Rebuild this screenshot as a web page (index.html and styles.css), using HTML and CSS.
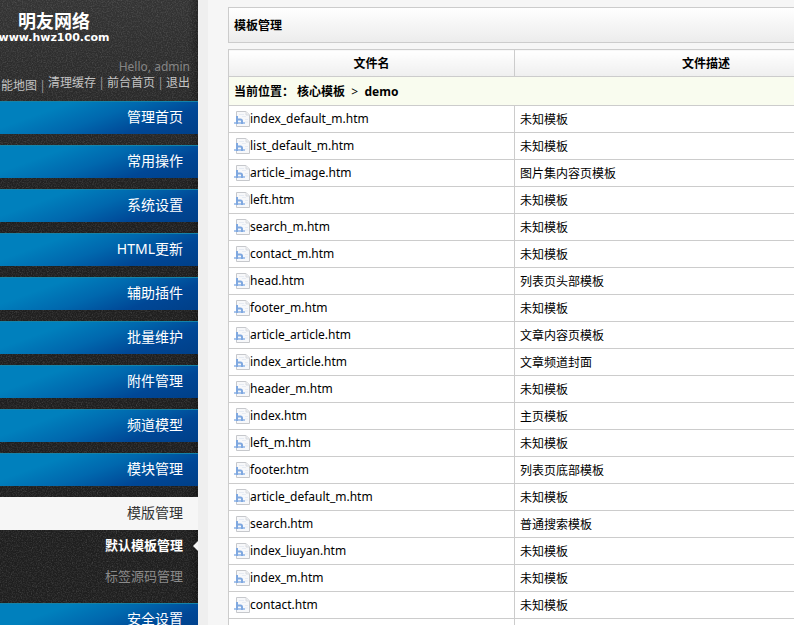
FILE: index.html
```
<!DOCTYPE html>
<html lang="zh-CN">
<head>
<meta charset="utf-8">
<title>模板管理</title>
<link rel="stylesheet" href="styles.css">
</head>
<body>
<svg class="defs" aria-hidden="true">
  <symbol id="file" viewBox="0 0 16 16">
    <path d="M2.500 .5h9.500l3.500 3.500v11.500h-13z" fill="#f7f8fa" stroke="#c6c8cc"/>
    <path d="M12 .5v3.500h3.500" fill="#eceef1" stroke="#d8dade"/>
    <path d="M5 3.500h5M8 5.500h4M11 8.500h3M11 11h3" stroke="#e6ebf3" fill="none"/>
    <path d="M0 11h11v2H0z" fill="#a9c5eb"/>
    <path d="M3 5v8M3 8.500h3.500q1.500 0 1.500 1.500v3" fill="none" stroke="#7fa8e0" stroke-width="2"/>
  </symbol>
</svg>
<div class="layout">
  <aside class="sidebar">
    <svg class="grain" aria-hidden="true">
      <filter id="noise" x="0" y="0" width="100%" height="100%">
        <feTurbulence type="fractalNoise" baseFrequency="0.8" numOctaves="2" seed="4"/>
        <feColorMatrix type="matrix" values="0 0 0 0 1  0 0 0 0 1  0 0 0 0 1  0.6 0.6 0 0 -0.52"/>
      </filter>
      <rect width="100%" height="100%" filter="url(#noise)"/>
    </svg>
    <header class="brand">
      <div class="logo"><strong>明友网络</strong><span>www.hwz100.com</span></div>
      <p class="hello">Hello, admin</p>
      <p class="quick"><a class="map" href="#">能地图</a><i>|</i><a href="#">清理缓存</a><i>|</i><a href="#">前台首页</a><i>|</i><a href="#">退出</a></p>
    </header>
    <nav class="menu">
      <a href="#">管理首页</a>
      <a href="#">常用操作</a>
      <a href="#">系统设置</a>
      <a href="#">HTML更新</a>
      <a href="#">辅助插件</a>
      <a href="#">批量维护</a>
      <a href="#">附件管理</a>
      <a href="#">频道模型</a>
      <a href="#">模块管理</a>
      <a class="current" href="#">模版管理</a>
      <div class="submenu">
        <a class="on" href="#">默认模板管理</a>
        <a href="#">标签源码管理</a>
      </div>
      <a href="#">安全设置</a>
    </nav>
  </aside>
  <main class="content">
    <h1 class="panel">模板管理</h1>
    <table class="files">
      <colgroup><col class="name"><col></colgroup>
      <thead><tr><th>文件名</th><th>文件描述</th></tr></thead>
      <tbody>
        <tr class="path"><td colspan="2"><b>当前位置： 核心模板</b>&nbsp; &gt; &nbsp;<b>demo</b></td></tr>
        <tr><td><a href="#"><svg><use href="#file"/></svg>index_default_m.htm</a></td><td>未知模板</td></tr>
        <tr><td><a href="#"><svg><use href="#file"/></svg>list_default_m.htm</a></td><td>未知模板</td></tr>
        <tr><td><a href="#"><svg><use href="#file"/></svg>article_image.htm</a></td><td>图片集内容页模板</td></tr>
        <tr><td><a href="#"><svg><use href="#file"/></svg>left.htm</a></td><td>未知模板</td></tr>
        <tr><td><a href="#"><svg><use href="#file"/></svg>search_m.htm</a></td><td>未知模板</td></tr>
        <tr><td><a href="#"><svg><use href="#file"/></svg>contact_m.htm</a></td><td>未知模板</td></tr>
        <tr><td><a href="#"><svg><use href="#file"/></svg>head.htm</a></td><td>列表页头部模板</td></tr>
        <tr><td><a href="#"><svg><use href="#file"/></svg>footer_m.htm</a></td><td>未知模板</td></tr>
        <tr><td><a href="#"><svg><use href="#file"/></svg>article_article.htm</a></td><td>文章内容页模板</td></tr>
        <tr><td><a href="#"><svg><use href="#file"/></svg>index_article.htm</a></td><td>文章频道封面</td></tr>
        <tr><td><a href="#"><svg><use href="#file"/></svg>header_m.htm</a></td><td>未知模板</td></tr>
        <tr><td><a href="#"><svg><use href="#file"/></svg>index.htm</a></td><td>主页模板</td></tr>
        <tr><td><a href="#"><svg><use href="#file"/></svg>left_m.htm</a></td><td>未知模板</td></tr>
        <tr><td><a href="#"><svg><use href="#file"/></svg>footer.htm</a></td><td>列表页底部模板</td></tr>
        <tr><td><a href="#"><svg><use href="#file"/></svg>article_default_m.htm</a></td><td>未知模板</td></tr>
        <tr><td><a href="#"><svg><use href="#file"/></svg>search.htm</a></td><td>普通搜索模板</td></tr>
        <tr><td><a href="#"><svg><use href="#file"/></svg>index_liuyan.htm</a></td><td>未知模板</td></tr>
        <tr><td><a href="#"><svg><use href="#file"/></svg>index_m.htm</a></td><td>未知模板</td></tr>
        <tr><td><a href="#"><svg><use href="#file"/></svg>contact.htm</a></td><td>未知模板</td></tr>
        <tr><td></td><td></td></tr>
      </tbody>
    </table>
  </main>
</div>
</body>
</html>
```
FILE: styles.css
```
* { box-sizing: border-box; }
body {
  margin: 0;
  background: #f6f6f6;
  color: #000;
  font: 12px/18px "Noto Sans", "Noto Sans CJK SC", sans-serif;
  overflow: hidden;
}
a { color: inherit; text-decoration: none; }
p, h1 { margin: 0; }
.defs { position: absolute; width: 0; height: 0; }
.layout { display: flex; height: 100vh; overflow: hidden; }

/* Sidebar */
.sidebar {
  position: relative;
  flex: 0 0 198px;
  overflow: hidden;
  background: linear-gradient(#343434, #1f1f1f 200px);
}
.sidebar::before {
  content: "";
  position: absolute;
  inset: 0 0 0 auto;
  width: 10px;
  background: linear-gradient(to right, transparent, rgba(0, 0, 0, .3));
}
.grain { position: absolute; inset: 0; width: 100%; height: 100%; opacity: .35; }
.brand { position: relative; height: 101px; padding: 10px 8px 0 0; }
.logo { display: flex; flex-direction: column; align-items: center; width: 108px; color: #fff; }
.logo strong { font-size: 18px; line-height: 22px; }
.logo span { font: bold 11px/12px "DejaVu Sans", sans-serif; }
.hello { margin-top: 14px; color: #868686; font-size: 12px; line-height: 18px; text-align: right; }
.quick { display: flex; justify-content: flex-end; line-height: 14px; color: #c4c4c4; white-space: nowrap; }
.quick i { width: 11px; text-align: center; font-style: normal; color: #999; }
.quick .map, .quick .map + i { padding-top: 3px; }
.menu { position: relative; display: flex; flex-direction: column; gap: 11px; }
.menu > a {
  height: 33px;
  padding-right: 15px;
  border-top: 1px solid #1583a8;
  background: linear-gradient(160deg, #0080bd 25%, #0068ae 50%, #004796 75%, #003f88);
  color: #fff;
  font-size: 14px;
  line-height: 29px;
  text-align: right;
}
.menu > .current { background: #f6f6f6; border-color: #f6f6f6; color: #333; }
.submenu { margin-top: -11px; display: flex; flex-direction: column; }
.submenu a { position: relative; height: 31px; padding-right: 15px; color: #8b8b8b; font-size: 13px; line-height: 31px; text-align: right; }
.submenu .on { color: #fff; font-weight: bold; }
.submenu .on::after {
  content: "";
  position: absolute;
  right: 0;
  top: 11px;
  border: 5px solid transparent;
  border-right-color: #f6f6f6;
  border-left: 0;
}

/* Content */
.content { flex: 1 0 700px; padding: 7px 0 0 20px; border-left: 10px solid #efefef; }
.panel {
  height: 36px;
  padding-left: 5px;
  border: 1px solid #ccc;
  background: linear-gradient(#fff, #ececec);
  font-size: 12px;
  line-height: 36px;
}
.files {
  width: 100%;
  margin-top: 6px;
  border-collapse: collapse;
  table-layout: fixed;
  background: #fff;
}
.files .name { width: 286px; }
.files th, .files td { height: 27px; padding: 2px 5px 0; border: 1px solid #ccc; }
.files th { background: linear-gradient(#fff, #efefef); }
.files .path td { height: 29px; background: #f9fcef; }
.files td:first-child:not([colspan]) { padding-top: 0; }
.files td a { display: flex; align-items: center; }
.files svg { width: 16px; height: 16px; }
```
